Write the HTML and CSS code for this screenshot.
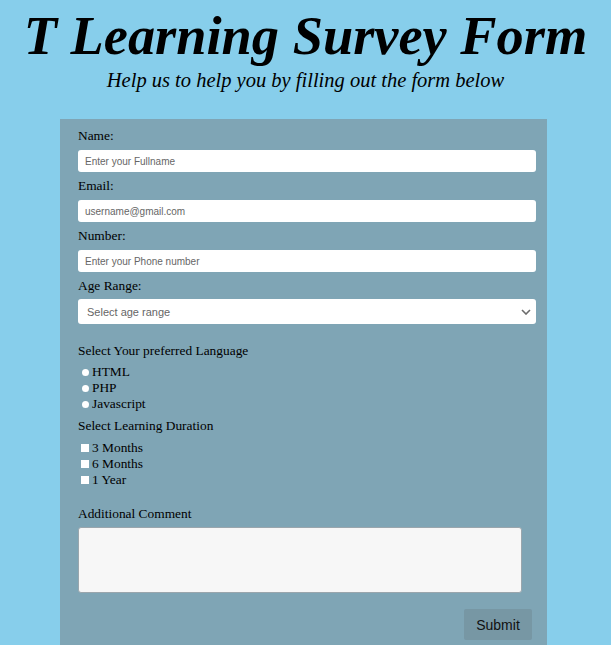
FILE: index.html
```html
<!DOCTYPE html>
<html lang="en">
<head>
<meta charset="utf-8">
<title>T Learning Survey Form</title>
<link rel="stylesheet" href="styles.css">
</head>
<body>
<header class="head">
  <h1 class="title">T Learning Survey Form</h1>
  <p class="subtitle">Help us to help you by filling out the form below</p>
</header>
<form class="card">
  <label class="lbl" for="name">Name:</label>
  <input class="field" id="name" type="text" placeholder="Enter your Fullname">
  <label class="lbl" for="email">Email:</label>
  <input class="field" id="email" type="email" placeholder="username@gmail.com">
  <label class="lbl" for="num">Number:</label>
  <input class="field" id="num" type="text" placeholder="Enter your Phone number">
  <label class="lbl lbl-age" for="age">Age Range:</label>
  <div class="select">
    <span class="select-text">Select age range</span>
    <svg class="chev" width="10" height="6" viewBox="0 0 10 6"><path d="M1 1l4 4 4-4" fill="none" stroke="#6b6b6b" stroke-width="1.6"/></svg>
  </div>

  <p class="group-title lang-title">Select Your preferred Language</p>
  <div class="opts">
    <label class="opt"><span class="radio"></span>HTML</label>
    <label class="opt"><span class="radio"></span>PHP</label>
    <label class="opt"><span class="radio"></span>Javascript</label>
  </div>
  <p class="group-title dur-title">Select Learning Duration</p>
  <div class="opts checks">
    <label class="opt"><span class="box"></span>3 Months</label>
    <label class="opt"><span class="box"></span>6 Months</label>
    <label class="opt"><span class="box"></span>1 Year</label>
  </div>

  <p class="group-title comment-title">Additional Comment</p>
  <div class="comment"></div>
  <div class="actions">
    <button class="submit" type="button">Submit</button>
  </div>
</form>
</body>
</html>
```
FILE: styles.css
```css
* { box-sizing: border-box; }
html, body { margin: 0; padding: 0; }
body {
  background: #87ceeb;
  font-family: "Liberation Serif", "Times New Roman", serif;
  color: #000;
  width: 611px;
  height: 645px;
  overflow: hidden;
}
.head { text-align: center; padding-top: 7px; }
.title {
  margin: 0;
  font-size: 54.4px;
  line-height: 59px;
  font-style: italic;
  font-weight: bold;
  white-space: nowrap;
}
.subtitle {
  margin: 2px 0 0 0;
  font-size: 20.5px;
  line-height: 24px;
  font-style: italic;
}
.card {
  margin: 27px 0 0 60px;
  width: 487px;
  height: 540px;
  background: #7fa5b5;
  padding: 9px 11px 0 18px;
  display: flex;
  flex-direction: column;
}
.lbl {
  font-size: 13.4px;
  line-height: 16px;
  height: 22px;
}
.lbl-age { height: 21px; }
.field {
  width: 458px;
  height: 22px;
  border: 0;
  border-radius: 3px;
  background: #fff;
  padding: 0 7px;
  font-family: "Liberation Sans", Arial, sans-serif;
  font-size: 10px;
  color: #333;
  margin-bottom: 6px;
  outline: none;
}
.field::placeholder { color: #666; }
.select {
  width: 458px;
  height: 25px;
  background: #fff;
  border-radius: 3px;
  display: flex;
  align-items: center;
  justify-content: space-between;
  padding: 0 5px 0 9px;
  font-family: "Liberation Sans", Arial, sans-serif;
  font-size: 11px;
  color: #666;
}
.group-title {
  margin: 0;
  font-size: 13.4px;
  line-height: 16px;
}
.lang-title { margin-top: 19px; }
.opts { display: flex; flex-direction: column; padding-left: 4px; margin-top: 5px; }
.opt {
  display: flex;
  align-items: center;
  font-size: 13.4px;
  line-height: 16px;
}
.radio {
  width: 7px; height: 7px; border-radius: 50%;
  background: #fff; margin-right: 3px;
}
.box {
  width: 8px; height: 8px; background: #fff;
  margin-right: 3px; margin-left: -1px;
}
.dur-title { margin-top: 6px; }
.checks { margin-top: 6px; }
.comment-title { margin-top: 18px; }
.comment {
  margin-top: 5px;
  width: 444px;
  height: 66px;
  background: #f7f7f7;
  border: 1px solid #9aa6ad;
  border-radius: 3px;
}
.actions { display: flex; justify-content: flex-end; padding-right: 4px; margin-top: 16px; }
.submit {
  width: 68px;
  height: 31px;
  border: 0;
  border-radius: 2px;
  background: #7797a4;
  font-family: "Liberation Sans", Arial, sans-serif;
  font-size: 14px;
  color: #111;
}
```
